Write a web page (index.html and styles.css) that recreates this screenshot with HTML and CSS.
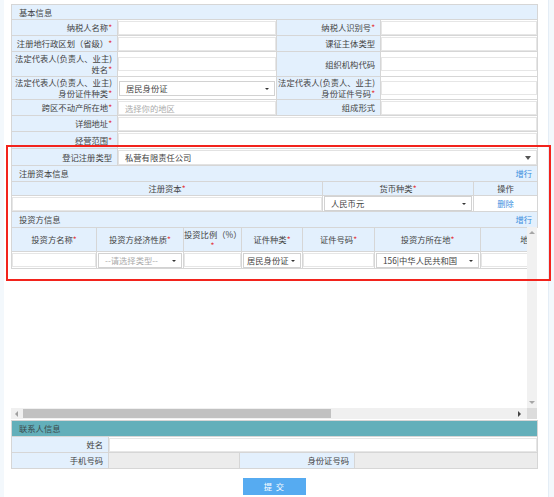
FILE: index.html
```html
<!DOCTYPE html>
<html lang="zh-CN">
<head>
  <meta charset="UTF-8" />
  <title>基本信息</title>
  <link rel="stylesheet" href="styles.css">
</head>
<body>

  <div class="panel">

    <!-- 基本信息 -->
    <table class="form">
      <colgroup>
        <col class="w106"><col class="w159"><col class="w104"><col class="w157">
      </colgroup>
      <tr class="h15 head"><td colspan="4">基本信息</td></tr>
      <tr class="h16">
        <th>纳税人名称<i>*</i></th><td><div class="field"></div></td>
        <th>纳税人识别号<i>*</i></th><td><div class="field"></div></td>
      </tr>
      <tr class="h16">
        <th>注册地行政区划（省级）<i>*</i></th><td><div class="field"></div></td>
        <th>课征主体类型</th><td><div class="field"></div></td>
      </tr>
      <tr class="h25">
        <th>法定代表人(负责人、业主)<br>姓名<i>*</i></th><td><div class="field"></div></td>
        <th>组织机构代码</th><td><div class="field"></div></td>
      </tr>
      <tr class="h23">
        <th>法定代表人(负责人、业主)<br>身份证件种类<i>*</i></th><td><div class="select">居民身份证</div></td>
        <th>法定代表人(负责人、业主)<br>身份证件号码<i>*</i></th><td><div class="field"></div></td>
      </tr>
      <tr class="h16">
        <th>跨区不动产所在地<i>*</i></th><td><div class="field hint">选择你的地区</div></td>
        <th>组成形式</th><td><div class="field"></div></td>
      </tr>
      <tr class="h16">
        <th>详细地址<i>*</i></th><td colspan="3"><div class="field"></div></td>
      </tr>
      <tr class="h17">
        <th>经营范围<i>*</i></th><td colspan="3"><div class="field"></div></td>
      </tr>
      <tr class="h17">
        <th>登记注册类型</th><td colspan="3"><div class="select solid">私营有限责任公司</div></td>
      </tr>
    </table>

    <!-- 注册资本信息 -->
    <table class="form">
      <colgroup>
        <col class="w311"><col class="w151"><col class="w64">
      </colgroup>
      <tr class="h16 head"><td colspan="3">注册资本信息<a href="#">增行</a></td></tr>
      <tr class="h14 cols">
        <th>注册资本<i>*</i></th><th>货币种类<i>*</i></th><th>操作</th>
      </tr>
      <tr class="h16">
        <td><div class="field"></div></td>
        <td><div class="select">人民币元</div></td>
        <td class="center"><a href="#">删除</a></td>
      </tr>
      <tr class="h16 head"><td colspan="3">投资方信息<a href="#">增行</a></td></tr>
    </table>

    <!-- 投资方信息 -->
    <div class="scroll">
      <div class="scroll-main">
        <div class="scroll-view">
          <table class="form investors">
            <colgroup>
              <col class="w85"><col class="w87"><col class="w58"><col class="w61">
              <col class="w72"><col class="w106"><col class="w100">
            </colgroup>
            <tr class="h24 cols">
              <th>投资方名称<i>*</i></th>
              <th>投资方经济性质<i>*</i></th>
              <th class="top">投资比例（%）<br><i>*</i></th>
              <th>证件种类<i>*</i></th>
              <th>证件号码<i>*</i></th>
              <th>投资方所在地<i>*</i></th>
              <th>地址<i>*</i></th>
            </tr>
            <tr class="h17">
              <td><div class="field"></div></td>
              <td><div class="select hint">--请选择类型--</div></td>
              <td><div class="field"></div></td>
              <td><div class="select tight">居民身份证</div></td>
              <td><div class="field"></div></td>
              <td><div class="select">156|中华人民共和国</div></td>
              <td><div class="field"></div></td>
            </tr>
          </table>
        </div>
        <div class="vbar"><span class="arr up"></span><span class="arr down"></span></div>
      </div>
      <div class="hbar-row">
        <div class="hbar"><span class="arr left"></span><span class="thumb"></span><span class="arr right"></span></div>
        <div class="corner"></div>
      </div>
    </div>

    <!-- 联系人信息 -->
    <table class="form contact">
      <colgroup>
        <col class="w97"><col class="w131"><col class="w115"><col class="w183">
      </colgroup>
      <tr class="h16 teal"><td colspan="4">联系人信息</td></tr>
      <tr class="h16">
        <th>姓名</th><td colspan="3"><div class="field"></div></td>
      </tr>
      <tr class="h16">
        <th>手机号码</th><td class="off"></td>
        <th>身份证号码</th><td class="off"></td>
      </tr>
    </table>

    <div class="actions">
      <button class="btn">提&nbsp;&nbsp;交</button>
    </div>

    <!-- 标注框 -->
    <div class="mark"></div>
  </div>

</body>
</html>
```

FILE: styles.css
```css
* {
  box-sizing: border-box;
  margin: 0;
  padding: 0;
}

body {
  font-family: "Noto Sans CJK SC", "Noto Sans", sans-serif;
  font-size: 8.3px;
  color: #444;
  background-color: #f3f8fc;
}

a {
  color: #3d8fe0;
  text-decoration: none;
}

i {
  color: #e4393c;
  font-style: normal;
}

.panel {
  position: relative;
  margin-left: 4px;
  width: 545px;
  min-height: 497px;
  background-color: #fff;
  border-right: 1px solid #e4edf6;
  padding: 4px 11px 0 7px;
}

/* TABLES */
.form {
  width: 100%;
  border-collapse: collapse;
  table-layout: fixed;
}

.form + .form {
  margin-top: -1px;
}

.form th,
.form td {
  border: 1px solid #d6d6d6;
  padding: 0;
  font-weight: normal;
  line-height: 11px;
  vertical-align: middle;
}

.form th {
  background-color: #e3f0fd;
  text-align: right;
  padding-right: 5px;
  white-space: nowrap;
}

.form .cols th {
  text-align: center;
  padding: 0;
}

.form .cols th.top {
  vertical-align: top;
  padding-top: 1px;
}

.form .head td {
  background-color: #e3f0fd;
  padding-left: 7px;
}

.form .head a {
  float: right;
  padding-right: 5px;
}

.form .teal td {
  background-color: #63afba;
  color: #3c4a4c;
  padding-left: 7px;
}

.form td.center {
  text-align: center;
}

.form td.off {
  background-color: #ececec;
}

.w85 { width: 85px; }
.w87 { width: 87px; }
.w58 { width: 58px; }
.w61 { width: 61px; }
.w64 { width: 64px; }
.w72 { width: 72px; }
.w97 { width: 97px; }
.w100 { width: 100px; }
.w104 { width: 104px; }
.w106 { width: 106px; }
.w115 { width: 115px; }
.w131 { width: 131px; }
.w151 { width: 151px; }
.w157 { width: 157px; }
.w159 { width: 159px; }
.w183 { width: 183px; }
.w311 { width: 311px; }

.h14 th, .h14 td { height: 14px; }
.h15 th, .h15 td { height: 15px; }
.h16 th, .h16 td { height: 16px; }
.h17 th, .h17 td { height: 17px; }
.h23 th, .h23 td { height: 23px; }
.h24 th, .h24 td { height: 24px; }
.h25 th, .h25 td { height: 25px; }

/* FIELDS */
.field {
  height: 14px;
  border: 1px solid #e6e6e6;
  background-color: #fff;
  padding-left: 6px;
  line-height: 12px;
  white-space: nowrap;
  overflow: hidden;
}

.hint {
  color: #aaa;
}

.select {
  position: relative;
  height: 15px;
  margin: 0 1px;
  border: 1px solid #d2d2d2;
  background-color: #fff;
  padding-left: 6px;
  line-height: 13px;
  white-space: nowrap;
  overflow: hidden;
}

.select.tight {
  padding-left: 3px;
}

.select::after {
  content: "";
  position: absolute;
  right: 5px;
  top: 6px;
  border-left: 2px solid transparent;
  border-right: 2px solid transparent;
  border-top: 2px solid #333;
}

.select.solid {
  border-color: #e2e2e2;
  margin: 0;
}

.select.solid::after {
  top: 5px;
  border-left-width: 3px;
  border-right-width: 3px;
  border-top-width: 4px;
  border-top-color: #555;
}

/* SCROLL AREA */
.scroll {
  margin-top: -1px;
}

.scroll-main {
  display: flex;
  height: 181px;
}

.scroll-view {
  flex: 1;
  overflow: hidden;
}

.investors {
  width: 569px;
}

.vbar {
  width: 10px;
  background-color: #f1f1f1;
  display: flex;
  flex-direction: column;
  justify-content: space-between;
  align-items: center;
  padding: 4px 0;
}

.hbar-row {
  display: flex;
  height: 11px;
}

.hbar {
  flex: 1;
  display: flex;
  align-items: center;
  background-color: #f0f0f0;
  padding: 0 6px 0 4px;
}

.thumb {
  width: 308px;
  height: 9px;
  margin-left: 5px;
  background-color: #c1c1c1;
}

.corner {
  width: 10px;
  background-color: #dcdcdc;
}

.arr {
  width: 0;
  height: 0;
  border: 3px solid transparent;
}

.arr.up {
  border-top: 0;
  border-bottom-color: #a6a6a6;
}

.arr.down {
  border-bottom: 0;
  border-top-color: #a6a6a6;
}

.arr.left {
  border-left: 0;
  border-right-color: #a0a0a0;
}

.arr.right {
  margin-left: auto;
  border-right: 0;
  border-left-color: #444;
}

/* CONTACT + SUBMIT */
.contact {
  margin-top: 1px;
}

.actions {
  text-align: center;
  padding-top: 9px;
}

.btn {
  width: 63px;
  height: 17px;
  border: none;
  background-color: #56abf1;
  color: #fff;
  font-family: inherit;
  font-size: 8.3px;
  line-height: 17px;
}

/* annotation box over the form */
.mark {
  position: absolute;
  left: 2px;
  top: 145px;
  width: 545px;
  height: 136px;
  border: 2px solid #f2231c;
  pointer-events: none;
}
```
